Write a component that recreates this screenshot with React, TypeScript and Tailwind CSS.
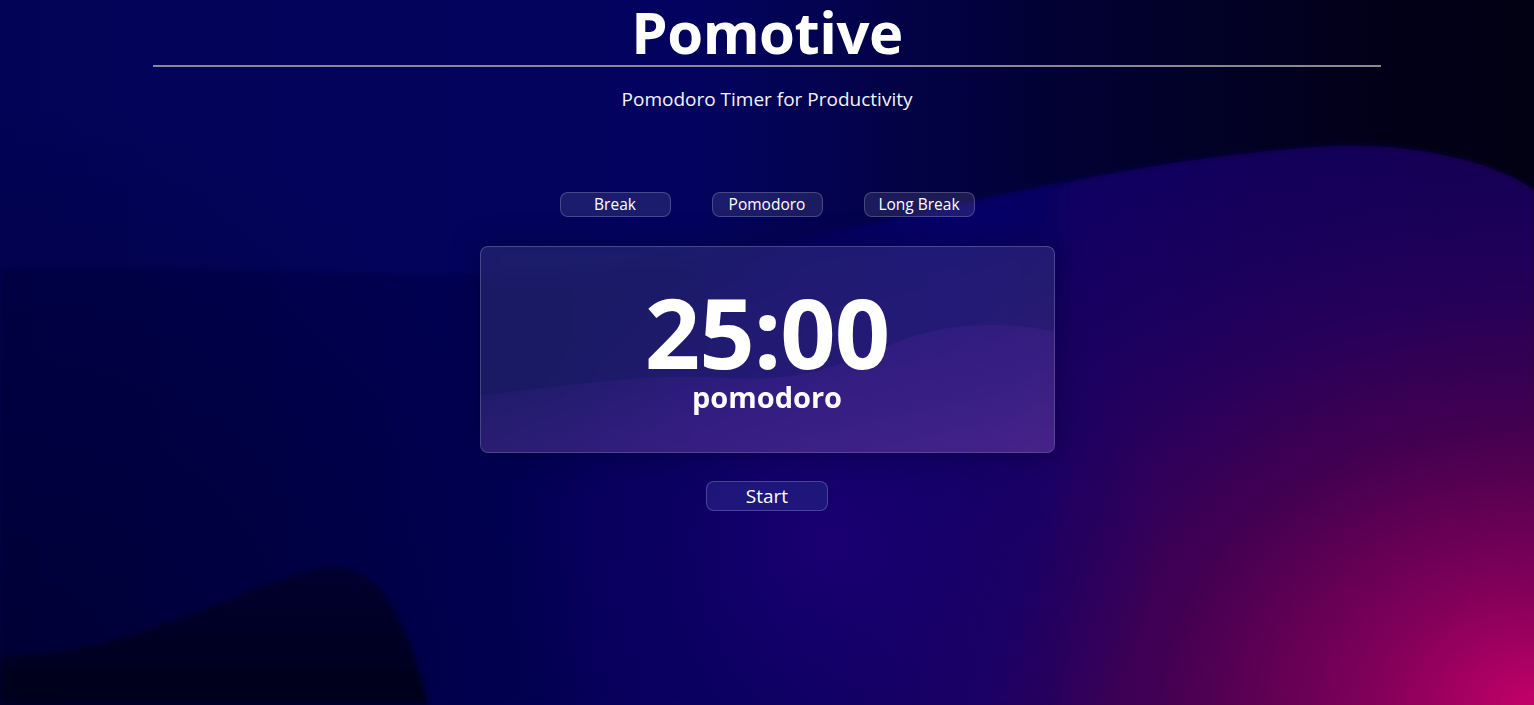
import React, { useState } from 'react';

type Mode = 'break' | 'pomodoro' | 'long';

const MODES: { id: Mode; label: string; minutes: number; name: string }[] = [
  { id: 'break', label: 'Break', minutes: 5, name: 'break' },
  { id: 'pomodoro', label: 'Pomodoro', minutes: 25, name: 'pomodoro' },
  { id: 'long', label: 'Long Break', minutes: 15, name: 'long break' },
];

const WAVE =
  'M0 268 C 300 262 480 292 680 262 C 900 225 1100 160 1330 146 C 1420 142 1500 165 1534 190 L1534 705 L0 705 Z';

function Backdrop() {
  return (
    <svg className="absolute inset-0 h-full w-full" viewBox="0 0 1534 705" preserveAspectRatio="none" aria-hidden="true">
      <defs>
        <linearGradient id="base" x1="0" y1="0" x2="1534" y2="0" gradientUnits="userSpaceOnUse">
          <stop offset="0" stopColor="#020256" />
          <stop offset="0.45" stopColor="#03035f" />
          <stop offset="0.7" stopColor="#020132" />
          <stop offset="0.88" stopColor="#02001a" />
          <stop offset="1" stopColor="#020012" />
        </linearGradient>
        <linearGradient id="waveBase" x1="0" y1="0" x2="1534" y2="0" gradientUnits="userSpaceOnUse">
          <stop offset="0" stopColor="#02024a" />
          <stop offset="0.4" stopColor="#020254" />
          <stop offset="0.62" stopColor="#05056a" />
          <stop offset="0.85" stopColor="#0a0456" />
          <stop offset="1" stopColor="#10044c" />
        </linearGradient>
        <radialGradient
          id="magenta"
          cx="1534"
          cy="705"
          r="1050"
          gradientUnits="userSpaceOnUse"
          gradientTransform="translate(1534 705) scale(1 0.75) translate(-1534 -705)"
        >
          <stop offset="0" stopColor="#c4006a" stopOpacity="1" />
          <stop offset="0.14" stopColor="#8c005a" stopOpacity="0.95" />
          <stop offset="0.35" stopColor="#4e0050" stopOpacity="0.85" />
          <stop offset="0.55" stopColor="#2c005e" stopOpacity="0.65" />
          <stop offset="0.8" stopColor="#16005e" stopOpacity="0.25" />
          <stop offset="1" stopColor="#16005e" stopOpacity="0" />
        </radialGradient>
        <radialGradient id="glow" cx="830" cy="540" r="330" gradientUnits="userSpaceOnUse">
          <stop offset="0" stopColor="#1c0074" stopOpacity="0.85" />
          <stop offset="0.6" stopColor="#12006a" stopOpacity="0.4" />
          <stop offset="1" stopColor="#12006a" stopOpacity="0" />
        </radialGradient>
        <radialGradient id="dark" cx="0" cy="705" r="600" gradientUnits="userSpaceOnUse">
          <stop offset="0" stopColor="#000014" stopOpacity="0.4" />
          <stop offset="1" stopColor="#000014" stopOpacity="0" />
        </radialGradient>
        <linearGradient id="hill" x1="0" y1="560" x2="0" y2="705" gradientUnits="userSpaceOnUse">
          <stop offset="0" stopColor="#030230" />
          <stop offset="1" stopColor="#01001a" />
        </linearGradient>
        <filter id="soft" x="-5%" y="-5%" width="110%" height="110%">
          <feGaussianBlur stdDeviation="2.5" />
        </filter>
      </defs>
      <rect width="1534" height="705" fill="url(#base)" />
      <path d={WAVE} fill="url(#waveBase)" filter="url(#soft)" />
      <path d={WAVE} fill="url(#magenta)" />
      <ellipse cx="830" cy="540" rx="330" ry="330" fill="url(#glow)" />
      <rect width="1534" height="705" fill="url(#dark)" />
      <path d="M0 657 C 140 655 240 585 322 568 C 382 558 410 630 428 705 L0 705 Z" fill="url(#hill)" filter="url(#soft)" />
    </svg>
  );
}

export default function App() {
  const [mode, setMode] = useState<Mode>('pomodoro');
  const [running, setRunning] = useState(false);
  const current = MODES.find(m => m.id === mode)!;
  const time = `${String(current.minutes).padStart(2, '0')}:00`;

  return (
    <main className="relative h-[705px] w-full overflow-hidden bg-[#020250] text-white font-['Open_Sans',sans-serif]">
      <Backdrop />

      <div className="relative flex flex-col items-center">
        <h1 className="text-[58px] font-bold leading-[64px] tracking-[-0.5px]">Pomotive</h1>
        <div className="mt-[1px] h-[2px] w-[80%] bg-[#8a8a8a]" />
        <p className="mt-[18px] text-[19px] leading-[28px] text-[#f4f4ff]">Pomodoro Timer for Productivity</p>

        <div className="mt-[79px] flex gap-[41px]">
          {MODES.map(m => (
            <button
              key={m.id}
              onClick={() => setMode(m.id)}
              className="h-[25px] w-[111px] rounded-lg border border-white/20 bg-white/10 text-[15.5px] leading-none text-white"
            >
              {m.label}
            </button>
          ))}
        </div>

        <div className="relative mt-[29px] flex h-[207px] w-[575px] flex-col items-center justify-center overflow-hidden rounded-lg border border-white/20 bg-white/10 pb-[4px] shadow-[0_0_30px_rgba(0,0,30,0.35)] backdrop-blur-sm">
          <svg className="absolute inset-0 h-full w-full" viewBox="0 0 575 207" preserveAspectRatio="none" aria-hidden="true">
            <defs>
              <linearGradient id="cardWave" x1="0" y1="0" x2="1" y2="1">
                <stop offset="0" stopColor="#3a1a8a" stopOpacity="0" />
                <stop offset="0.45" stopColor="#4a2296" stopOpacity="0.3" />
                <stop offset="1" stopColor="#5a2a9a" stopOpacity="0.55" />
              </linearGradient>
            </defs>
            <path d="M0 150 C 120 135 180 128 240 132 C 320 138 360 120 420 95 C 480 72 540 78 575 85 L575 207 L0 207 Z" fill="url(#cardWave)" />
          </svg>
          <div className="relative text-[97px] font-bold leading-[98px] tracking-[-1px]">{time}</div>
          <div className="relative text-[29px] font-bold leading-[34px]">{current.name}</div>
        </div>

        <button
          onClick={() => setRunning(r => !r)}
          className="mt-[28px] h-[30px] w-[122px] rounded-lg border border-white/20 bg-[#221b80]/80 text-[19px] leading-none text-white"
        >
          {running ? 'Pause' : 'Start'}
        </button>
      </div>
    </main>
  );
}
